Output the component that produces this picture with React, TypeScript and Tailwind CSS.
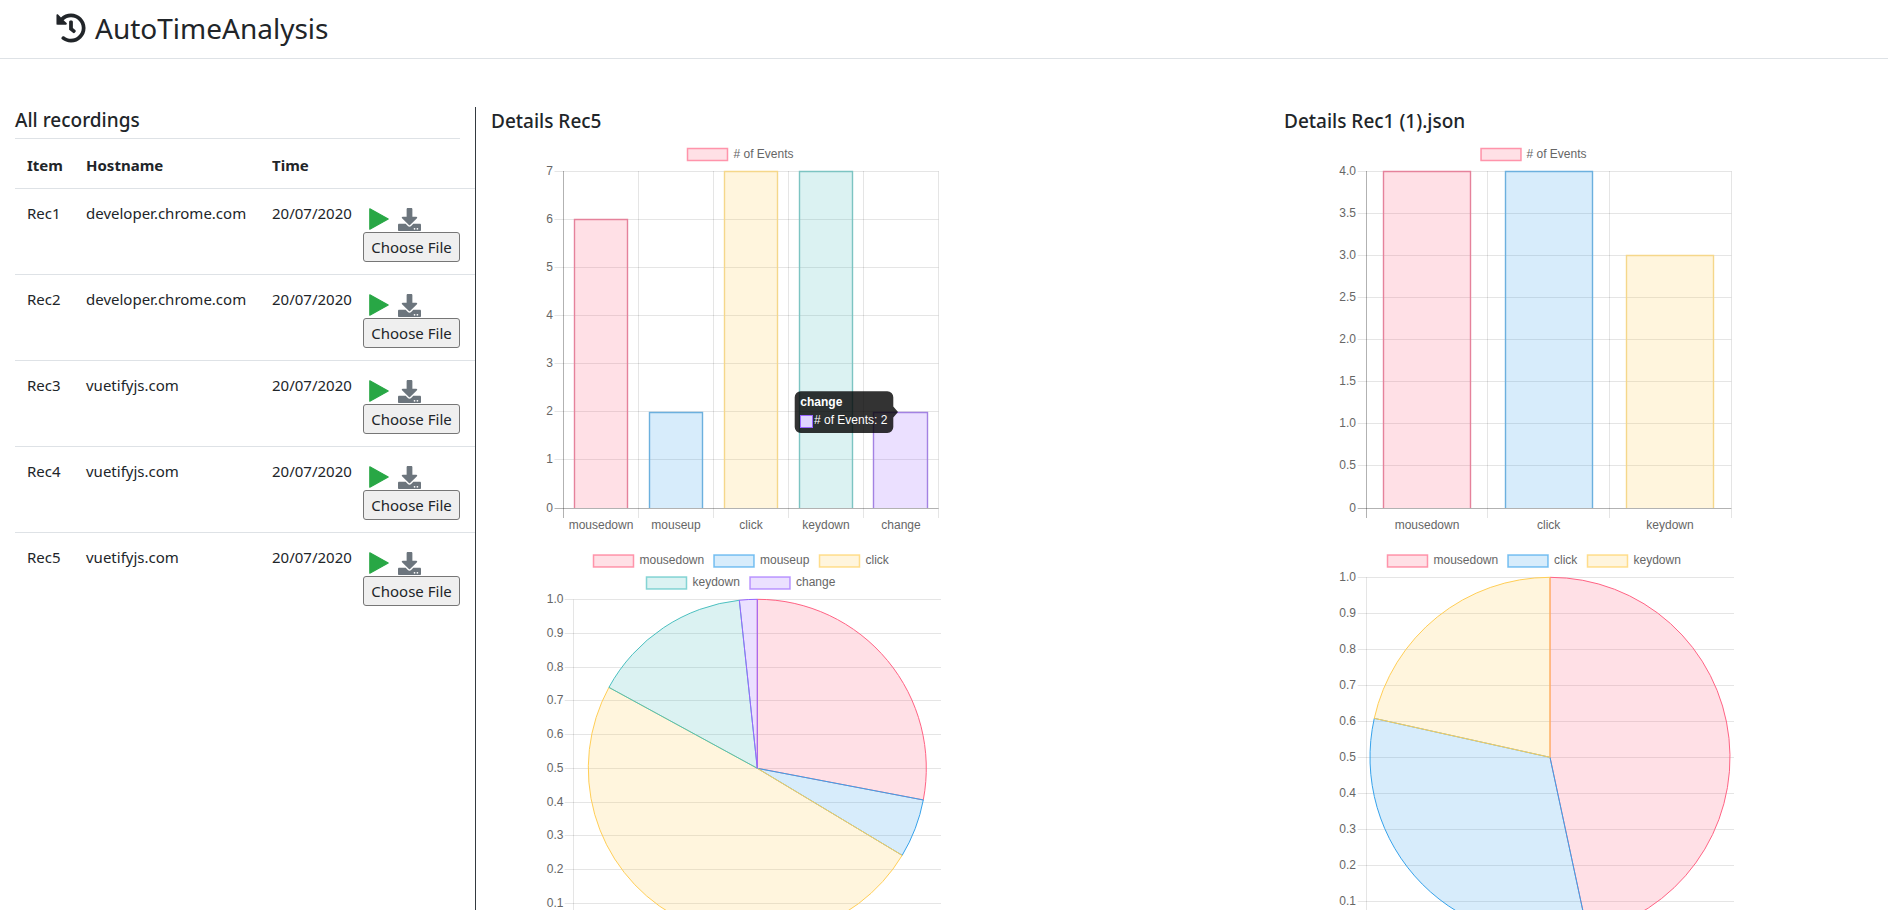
import { FaHistory, FaDownload } from "react-icons/fa";

const C = {
  pink: "255,99,132",
  blue: "54,162,235",
  yellow: "255,206,86",
  teal: "75,192,192",
  purple: "153,102,255",
};
const GRID = "rgba(0,0,0,0.1)";
const AXIS = "rgba(0,0,0,0.3)";
const TXT = "#666";
const FONT = "'Liberation Sans', Arial, sans-serif";
const px = (v: number) => Math.floor(v) + 0.5;

function Legend({ items, y }: { items: { c: string; x: number; tx: number; label: string }[]; y: number }) {
  return (
    <>
      {items.map((i) => (
        <g key={i.label}>
          <rect x={i.x} y={y} width={40} height={12} fill={`rgba(${i.c},0.2)`} stroke={`rgba(${i.c},0.65)`} strokeWidth={1.5} />
          <text x={i.tx} y={y + 6} dominantBaseline="middle" fontSize={12} fill={TXT} fontFamily={FONT}>
            {i.label}
          </text>
        </g>
      ))}
    </>
  );
}

function BarChart(p: {
  view: string;
  left: number;
  right: number;
  top: number;
  bottom: number;
  ticks: string[];
  labelRight: number;
  bars: { c: string; x0: number; x1: number; top: number; label: string; cx: number; edge: string }[];
  grid: number[];
  children?: React.ReactNode;
}) {
  const step = (p.bottom - p.top) / (p.ticks.length - 1);
  return (
    <svg viewBox={p.view} className="block w-[793px] h-[400px]">
      {p.ticks.map((t, i) => {
        const y = px(p.top + i * step);
        const last = i === p.ticks.length - 1;
        return (
          <g key={t}>
            <line x1={p.left - 9} x2={p.right} y1={y} y2={y} stroke={last ? AXIS : GRID} />
            <text x={p.labelRight} y={y} textAnchor="end" dominantBaseline="middle" fontSize={12} fill={TXT} fontFamily={FONT}>
              {t}
            </text>
          </g>
        );
      })}
      {p.grid.map((x, i) => (
        <line key={x} x1={px(x)} x2={px(x)} y1={p.top} y2={p.bottom + 10} stroke={i === 0 ? AXIS : GRID} />
      ))}
      {p.bars.map((b) => (
        <g key={b.label}>
          <rect x={b.x0} y={b.top} width={b.x1 - b.x0} height={p.bottom - b.top} fill={`rgba(${b.c},0.2)`} />
          <path d={`M${b.x0} ${p.bottom}V${px(b.top)}H${b.x1}V${p.bottom}`} fill="none" stroke={b.edge} strokeWidth={1.4} />
          <text x={b.cx} y={525.5} textAnchor="middle" dominantBaseline="middle" fontSize={12} fill={TXT} fontFamily={FONT}>
            {b.label}
          </text>
        </g>
      ))}
      {p.children}
    </svg>
  );
}

function PieChart(p: {
  view: string;
  left: number;
  right: number;
  top: number;
  step: number;
  labelRight: number;
  cx: number;
  cy: number;
  r: number;
  slices: { c: string; from: number; to: number }[];
  children?: React.ReactNode;
}) {
  const ticks = ["1.0", "0.9", "0.8", "0.7", "0.6", "0.5", "0.4", "0.3", "0.2", "0.1"];
  const pt = (a: number) => {
    const t = (a * Math.PI) / 180;
    return `${p.cx + p.r * Math.sin(t)} ${p.cy - p.r * Math.cos(t)}`;
  };
  return (
    <svg viewBox={p.view} className="block w-[793px] h-[370px]">
      {ticks.map((t, i) => {
        const y = px(p.top + i * p.step);
        return (
          <g key={t}>
            <line x1={p.left - 9} x2={p.right} y1={y} y2={y} stroke={GRID} />
            <text x={p.labelRight} y={y} textAnchor="end" dominantBaseline="middle" fontSize={12} fill={TXT} fontFamily={FONT}>
              {t}
            </text>
          </g>
        );
      })}
      <line x1={px(p.left)} x2={px(p.left)} y1={p.top} y2={920} stroke={GRID} />
      {p.slices.map((s) => (
        <path
          key={s.c}
          d={`M${p.cx} ${p.cy}L${pt(s.from)}A${p.r} ${p.r} 0 ${s.to - s.from > 180 ? 1 : 0} 1 ${pt(s.to)}Z`}
          fill={`rgba(${s.c},0.2)`}
          stroke={`rgba(${s.c},1)`}
          strokeWidth={1}
        />
      ))}
      {p.children}
    </svg>
  );
}

function Detail({ title, children }: { title: string; children: React.ReactNode }) {
  return (
    <section className="w-[793px] shrink-0">
      <h5 className="text-[19px] leading-[24px] font-medium h-[33px] pt-[2px] text-[#212529]">{title}</h5>
      {children}
    </section>
  );
}

const rows = [
  ["Rec1", "developer.chrome.com"],
  ["Rec2", "developer.chrome.com"],
  ["Rec3", "vuetifyjs.com"],
  ["Rec4", "vuetifyjs.com"],
  ["Rec5", "vuetifyjs.com"],
];

function PlayIcon() {
  return (
    <svg viewBox="0 0 20 22" className="w-[20px] h-[22px] block">
      <path d="M0.8 0.8L19.2 11L0.8 21.2Z" fill="#28a745" stroke="#28a745" strokeWidth={1.2} strokeLinejoin="round" />
    </svg>
  );
}

const E = {
  pink: "#e5829b",
  blue: "#6cb0de",
  yellow: "#f5d78a",
  teal: "#7cc4c2",
  purple: "#a382e3",
};

export default function App() {
  return (
    <div className="h-[910px] w-[1888px] overflow-hidden bg-white text-[#212529] font-['Noto_Sans','Open_Sans',sans-serif]">
      <header className="h-[59px] border-b border-[#dee2e6] pl-[56px] flex items-center gap-[9px]">
        <FaHistory className="w-[30px] h-[30px] text-[#212529] -mt-[2px]" />
        <span className="text-[28px] leading-[34px] -mt-[2px]">AutoTimeAnalysis</span>
      </header>
      <main className="flex pt-[48px]">
        <aside className="w-[476px] h-[803px] shrink-0 border-r border-[#343a40] pl-[15px]">
          <h5 className="text-[19px] leading-[24px] font-medium w-[445px] h-[32px] pt-[1px] border-b border-[#dee2e6]">
            All recordings
          </h5>
          <table className="table-fixed w-[460px] border-collapse text-[15px] leading-[24px]">
            <colgroup>
              <col className="w-[59px]" />
              <col className="w-[186px]" />
              <col className="w-[91px]" />
              <col className="w-[124px]" />
            </colgroup>
            <thead>
              <tr className="h-[49px] border-b border-[#dee2e6]">
                <th className="px-3 pt-[3px] text-left font-bold">Item</th>
                <th className="px-3 pt-[3px] text-left font-bold">Hostname</th>
                <th className="px-3 pt-[3px] text-left font-bold">Time</th>
                <th />
              </tr>
            </thead>
            <tbody>
              {rows.map(([item, host]) => (
                <tr key={item} className="h-[86px] border-b border-[#dee2e6] last:border-b-0 align-top">
                  <td className="px-3 pt-3">{item}</td>
                  <td className="px-3 pt-3 whitespace-nowrap">{host}</td>
                  <td className="pl-3 pt-3 whitespace-nowrap">20/07/2020</td>
                  <td className="pl-3 pt-[19px]">
                    <div className="flex items-center pl-[6px] gap-[9px] h-[23px]">
                      <PlayIcon />
                      <FaDownload className="w-[23px] h-[23px] text-[#6c757d]" />
                    </div>
                    <button className="block mt-[1px] w-[97px] h-[30px] rounded-[3px] border border-[#767676] bg-[#efefef] text-[15px] leading-[20px] whitespace-nowrap">
                      Choose File
                    </button>
                  </td>
                </tr>
              ))}
            </tbody>
          </table>
        </aside>
        <div className="flex pl-[15px]">
          <Detail title="Details Rec5">
            <BarChart
              view="491 140 793 400"
              left={563.5}
              right={938.5}
              top={171}
              bottom={508}
              labelRight={553}
              ticks={["7", "6", "5", "4", "3", "2", "1", "0"]}
              grid={[563.5, 638.5, 713.5, 788.5, 863.5, 938.5]}
              bars={[
                { c: C.pink, edge: E.pink, x0: 574.5, x1: 627.5, top: 219, label: "mousedown", cx: 601 },
                { c: C.blue, edge: E.blue, x0: 649.5, x1: 702.5, top: 412, label: "mouseup", cx: 676 },
                { c: C.yellow, edge: E.yellow, x0: 724.5, x1: 777.5, top: 171, label: "click", cx: 751 },
                { c: C.teal, edge: E.teal, x0: 799.5, x1: 852.5, top: 171, label: "keydown", cx: 826 },
                { c: C.purple, edge: E.purple, x0: 873.5, x1: 927.5, top: 412, label: "change", cx: 901 },
              ]}
            >
              <Legend y={148.5} items={[{ c: C.pink, x: 687.5, tx: 733.5, label: "# of Events" }]} />
              <path
                d="M800.7 391.3H887.3a6 6 0 0 1 6 6V406.5L898 412L893.3 417.5V427a6 6 0 0 1 -6 6H800.7a6 6 0 0 1 -6 -6V397.3a6 6 0 0 1 6 -6Z"
                fill="rgba(0,0,0,0.8)"
              />
              <text x={800.3} y={403} dominantBaseline="middle" fontSize={12} fontWeight="bold" fill="#fff" fontFamily={FONT}>
                change
              </text>
              <rect x={800.5} y={415.5} width={12} height={12} fill="#e0d5ff" stroke="#9966ff" />
              <text x={814} y={421} dominantBaseline="middle" fontSize={12} fill="#fff" fontFamily={FONT}>
                # of Events: 2
              </text>
            </BarChart>
            <PieChart
              view="491 540 793 370"
              left={573.7}
              right={941}
              top={599.5}
              step={33.75}
              labelRight={563.5}
              cx={757.3}
              cy={768.3}
              r={169}
              slices={[
                { c: C.pink, from: 0, to: 100.8 },
                { c: C.blue, from: 100.8, to: 121 },
                { c: C.yellow, from: 121, to: 298.6 },
                { c: C.teal, from: 298.6, to: 353.9 },
                { c: C.purple, from: 353.9, to: 360 },
              ]}
            >
              <Legend
                y={555}
                items={[
                  { c: C.pink, x: 593.5, tx: 639.5, label: "mousedown" },
                  { c: C.blue, x: 714, tx: 760, label: "mouseup" },
                  { c: C.yellow, x: 819.5, tx: 865.5, label: "click" },
                ]}
              />
              <Legend
                y={577}
                items={[
                  { c: C.teal, x: 646.5, tx: 692.5, label: "keydown" },
                  { c: C.purple, x: 750, tx: 796, label: "change" },
                ]}
              />
            </PieChart>
          </Detail>
          <Detail title="Details Rec1 (1).json">
            <BarChart
              view="1284 140 793 400"
              left={1366.7}
              right={1731.3}
              top={171}
              bottom={508}
              labelRight={1356}
              ticks={["4.0", "3.5", "3.0", "2.5", "2.0", "1.5", "1.0", "0.5", "0"]}
              grid={[1366.7, 1487.7, 1609.5, 1731.3]}
              bars={[
                { c: C.pink, edge: E.pink, x0: 1383.5, x1: 1470.5, top: 171, label: "mousedown", cx: 1427 },
                { c: C.blue, edge: E.blue, x0: 1505.5, x1: 1592.5, top: 171, label: "click", cx: 1548.7 },
                { c: C.yellow, edge: E.yellow, x0: 1626.5, x1: 1713.5, top: 255.5, label: "keydown", cx: 1670 },
              ]}
            >
              <Legend y={148.5} items={[{ c: C.pink, x: 1481, tx: 1526.5, label: "# of Events" }]} />
            </BarChart>
            <PieChart
              view="1284 540 793 370"
              left={1366.7}
              right={1734}
              top={577.3}
              step={36}
              labelRight={1356}
              cx={1550}
              cy={757.3}
              r={180}
              slices={[
                { c: C.pink, from: 0, to: 167.9 },
                { c: C.blue, from: 167.9, to: 282.5 },
                { c: C.yellow, from: 282.5, to: 360 },
              ]}
            >
              <Legend
                y={555}
                items={[
                  { c: C.pink, x: 1387.5, tx: 1433.5, label: "mousedown" },
                  { c: C.blue, x: 1508, tx: 1554, label: "click" },
                  { c: C.yellow, x: 1587.5, tx: 1633.5, label: "keydown" },
                ]}
              />
            </PieChart>
          </Detail>
        </div>
      </main>
    </div>
  );
}
